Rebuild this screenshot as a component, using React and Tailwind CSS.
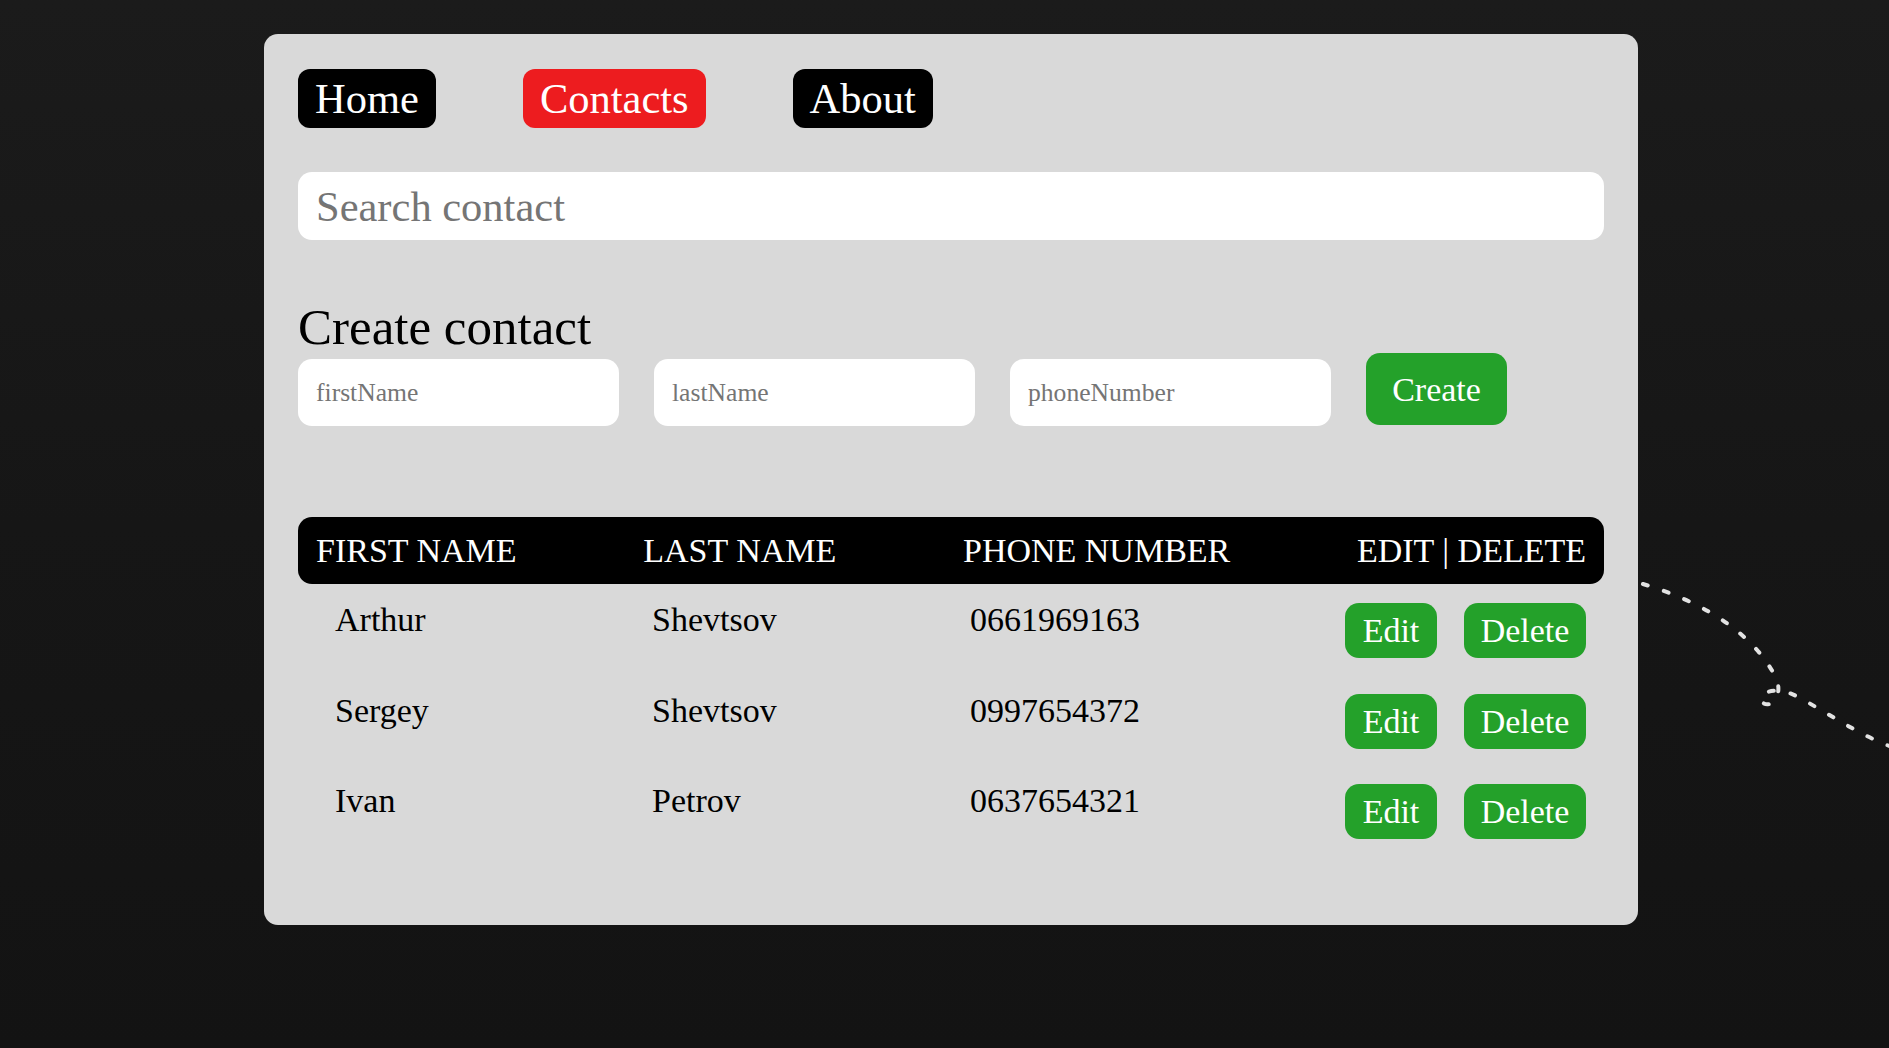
import React from "react";

const contacts = [
  { first: "Arthur", last: "Shevtsov", phone: "0661969163" },
  { first: "Sergey", last: "Shevtsov", phone: "0997654372" },
  { first: "Ivan", last: "Petrov", phone: "0637654321" },
];

function NavButton({ label, active }) {
  return (
    <a
      href="#"
      className={
        active
          ? "flex h-[59px] items-center rounded-[12px] bg-[#ed1c1f] px-[17px] text-[42.5px] leading-normal text-white"
          : "flex h-[59px] items-center rounded-[12px] bg-black px-[17px] text-[42.5px] leading-normal text-white"
      }
    >
      {label}
    </a>
  );
}

export default function App() {
  return (
    <div className="relative min-h-[1048px] w-full overflow-hidden bg-gradient-to-b from-[#1b1b1b] via-[#161616] to-[#131313] font-['Liberation_Serif',serif]">
      <svg
        className="pointer-events-none absolute left-0 top-0 z-0"
        width="1889"
        height="1048"
        viewBox="0 0 1889 1048"
      >
        <path
          d="M1600 574 C 1680 588, 1750 625, 1776 678 C 1784 696, 1770 710, 1762 702 C 1756 694, 1775 684, 1798 697 C 1830 714, 1860 736, 1895 748"
          fill="none"
          stroke="#e2e2e2"
          strokeWidth="4"
          strokeLinecap="round"
          strokeDasharray="5 17"
        />
      </svg>

      <div className="relative z-10 ml-[264px] pt-[34px]">
        <div className="h-[891px] w-[1374px] rounded-[14px] bg-[#d9d9d9] px-[34px] pt-[35px]">
          <nav className="flex gap-[87px]">
            <NavButton label="Home" />
            <NavButton label="Contacts" active />
            <NavButton label="About" />
          </nav>

          <input
            type="text"
            placeholder="Search contact"
            className="mt-[44px] block h-[68px] w-full rounded-[14px] bg-white px-[18px] text-[42.5px] text-black outline-none placeholder:text-[#757575]"
          />

          <h2 className="mt-[61px] text-[51px] leading-[52px] text-black">
            Create contact
          </h2>

          <div className="flex items-end gap-[35px]">
            <input
              type="text"
              placeholder="firstName"
              className="h-[67px] w-[321px] rounded-[14px] bg-white px-[18px] text-[25.6px] outline-none placeholder:text-[#757575]"
            />
            <input
              type="text"
              placeholder="lastName"
              className="h-[67px] w-[321px] rounded-[14px] bg-white px-[18px] text-[25.6px] outline-none placeholder:text-[#757575]"
            />
            <input
              type="text"
              placeholder="phoneNumber"
              className="h-[67px] w-[321px] rounded-[14px] bg-white px-[18px] text-[25.6px] outline-none placeholder:text-[#757575]"
            />
            <button className="mb-[1px] h-[72px] w-[141px] rounded-[14px] bg-[#24a12a] text-[34px] leading-normal text-white">
              Create
            </button>
          </div>

          <div className="mt-[91px] flex h-[67px] items-center justify-between rounded-[14px] bg-black px-[18px] text-[34px] leading-normal text-white">
            <span>FIRST NAME</span>
            <span>LAST NAME</span>
            <span>PHONE NUMBER</span>
            <span>EDIT | DELETE</span>
          </div>

          <div className="mt-[10px]">
            {contacts.map((c) => (
              <div
                key={c.phone}
                className="flex h-[90.5px] items-start pl-[37px] pr-[18px] text-[34px] leading-normal text-black"
              >
                <span className="w-[317px]">{c.first}</span>
                <span className="w-[318px]">{c.last}</span>
                <span className="flex-1">{c.phone}</span>
                <div className="mt-[9px] flex gap-[27px]">
                  <button className="h-[55px] w-[92px] rounded-[14px] bg-[#24a12a] text-[34px] leading-normal text-white">
                    Edit
                  </button>
                  <button className="h-[55px] w-[122px] rounded-[14px] bg-[#24a12a] text-[34px] leading-normal text-white">
                    Delete
                  </button>
                </div>
              </div>
            ))}
          </div>
        </div>
      </div>
    </div>
  );
}
